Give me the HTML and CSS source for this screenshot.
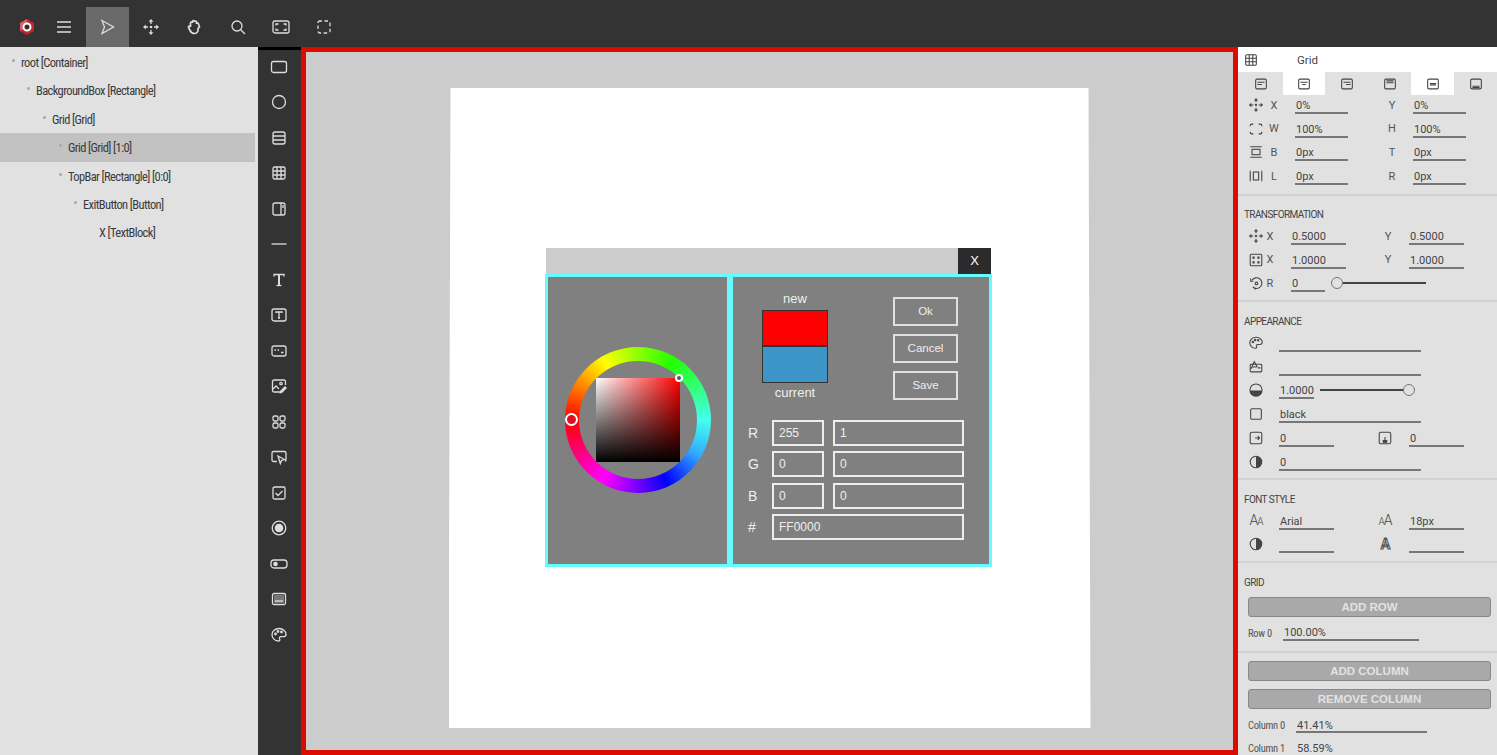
FILE: index.html
```html
<!DOCTYPE html>
<html lang="en">
<head>
    <meta charset="UTF-8">
    <meta name="viewport" content="width=device-width, initial-scale=1.0">
    <title>UI Editor</title>
    <link rel="stylesheet" href="styles.css">
</head>
<body>
    <svg class="sprite" xmlns="http://www.w3.org/2000/svg">
        <symbol id="i-arrow" viewBox="0 0 18 18"><path d="M4 2.500 15.500 9 4 15.500 6.500 9z"/></symbol>
        <symbol id="i-menu" viewBox="0 0 18 18"><path d="M2 4h14M2 9h14M2 14h14"/></symbol>
        <symbol id="i-move" viewBox="0 0 18 18"><circle class="solid" cx="9" cy="9" r="1.300"/><path d="M9 6V3M9 12v3M6 9H3M12 9h3"/><path class="solid" d="M9 1l2.400 2.800H6.600zM9 17l2.400-2.800H6.600zM1 9l2.800-2.400v4.800zM17 9l-2.800-2.400v4.800z"/></symbol>
        <symbol id="i-hand" viewBox="0 0 18 18"><path stroke-width="1.700" d="M5.500 9V5a1 1 0 0 1 2 0V3.500a1 1 0 0 1 2 0V4a1 1 0 0 1 2 0v2a1 1 0 0 1 2 .2l1 2.800-1.500 1.500c.3 3-.8 5-3.500 5-2.500 0-3.500-1-4.500-3L3.500 9.500c-.5-1.200 1.300-2 2-.5z"/></symbol>
        <symbol id="i-search" viewBox="0 0 18 18"><circle cx="8" cy="8" r="5"/><path d="m11.700 11.700 4.300 4.300"/></symbol>
        <symbol id="i-fit" viewBox="0 0 18 18"><rect x="1" y="3" width="16" height="12" rx="2"/><path d="M4 7.500V6h2.500M14 7.500V6h-2.500M4 10.500V12h2.500M14 10.500V12h-2.500"/></symbol>
        <symbol id="i-dash" viewBox="0 0 18 18"><rect x="3" y="3" width="12" height="12" rx="2" stroke-dasharray="3.500 2.500" stroke-dashoffset="1.500"/></symbol>
        <symbol id="i-rect" viewBox="0 0 18 18"><rect x="1.500" y="3.500" width="15" height="11" rx="2"/></symbol>
        <symbol id="i-circle" viewBox="0 0 18 18"><circle cx="9" cy="9" r="6.500"/></symbol>
        <symbol id="i-rows" viewBox="0 0 18 18"><rect x="3" y="3" width="12" height="12" rx="2"/><path d="M3 7h12M3 11h12"/></symbol>
        <symbol id="i-grid" viewBox="0 0 18 18"><rect x="3" y="3" width="12" height="12" rx="1.500"/><path d="M3 7h12M3 11h12M7 3v12M11 3v12"/></symbol>
        <symbol id="i-split" viewBox="0 0 18 18"><rect x="3" y="3" width="12" height="12" rx="2"/><path d="M11 3v12"/><path d="M13 5v3"/></symbol>
        <symbol id="i-line" viewBox="0 0 18 18"><path d="M1.500 9h15"/></symbol>
        <symbol id="i-t" viewBox="0 0 18 18"><path d="M4 5.500V3.500h10v2"/><path stroke-width="2" d="M9 3.500v11"/><path d="M6.500 14.500h5"/></symbol>
        <symbol id="i-tbox" viewBox="0 0 18 18"><rect x="2" y="3" width="14" height="12" rx="2"/><path d="M6 7V6h6v1M9 6v6M8 12h2"/></symbol>
        <symbol id="i-input" viewBox="0 0 18 18"><rect x="2" y="4" width="14" height="10" rx="2"/><path stroke-width="1.600" d="M4.500 8h1.500M7.500 8h1.500M11 10.500h2.500"/></symbol>
        <symbol id="i-img" viewBox="0 0 18 18"><path d="M10 15H4a1.500 1.500 0 0 1-1.500-1.500v-9A1.500 1.500 0 0 1 4 3h10a1.500 1.500 0 0 1 1.500 1.500V8"/><path d="m3 12 3-3 3 3"/><circle cx="11" cy="6.500" r="1.200"/><path class="solid" d="m10 14 5-5 2 2-5 5-2.500.5z"/></symbol>
        <symbol id="i-apps" viewBox="0 0 18 18"><rect x="3" y="3" width="5" height="5" rx="1.500"/><rect x="10" y="3" width="5" height="5" rx="1.500"/><rect x="3" y="10" width="5" height="5" rx="1.500"/><rect x="10" y="10" width="5" height="5" rx="1.500"/></symbol>
        <symbol id="i-cursor" viewBox="0 0 18 18"><path d="M7 13.500H3.500a1.500 1.500 0 0 1-1.500-1.500V5a1.500 1.500 0 0 1 1.500-1.500h11A1.500 1.500 0 0 1 16 5v7a1.500 1.500 0 0 1-1 1.400"/><path d="m8 8 6.500 3.500-3 1-1.200 3z"/></symbol>
        <symbol id="i-check" viewBox="0 0 18 18"><rect x="3" y="3" width="12" height="12" rx="1.500"/><path d="m5.500 9 2.500 2.500 4.500-4.500"/></symbol>
        <symbol id="i-radio" viewBox="0 0 18 18"><circle cx="9" cy="9" r="6.800"/><circle class="solid" cx="9" cy="9" r="4.300"/></symbol>
        <symbol id="i-toggle" viewBox="0 0 18 18"><rect x="1" y="5" width="16" height="8" rx="3"/><circle class="solid" cx="5.500" cy="9" r="2.300"/></symbol>
        <symbol id="i-panel" viewBox="0 0 18 18"><rect x="2.500" y="3.500" width="13" height="11" rx="1.500"/><rect class="dim" x="4" y="5" width="10" height="8"/><path d="M5 11h8"/></symbol>
        <symbol id="i-palette" viewBox="0 0 18 18"><path d="M9 2.500c-3.800 0-7 2.800-7 6.300 0 3.300 2.800 6.200 6.300 6.200 1.500 0 1.900-1 1.300-2-.6-1.100 0-2.300 1.300-2.300h2.300c1.500 0 2.800-.8 2.800-2.500 0-3.200-3.200-5.700-6.700-5.700z"/><circle cx="5.500" cy="8" r=".8"/><circle cx="8" cy="5.500" r=".8"/><circle cx="11.500" cy="6" r=".8"/></symbol>
        <symbol id="i-bgimg" viewBox="0 0 18 18"><rect x="2.500" y="6" width="13" height="8.500" rx="1"/><path d="M3.500 11 7 3l3.500 6M5 9h5M11 10h3"/></symbol>
        <symbol id="i-tab1" viewBox="0 0 18 18"><rect x="3" y="3.500" width="12" height="11" rx="1.500"/><path d="M5 7h8M5 9.500h5"/></symbol>
        <symbol id="i-tab2" viewBox="0 0 18 18"><rect x="3" y="3.500" width="12" height="11" rx="1.500"/><path d="M5 7h8M7 9.500h4"/></symbol>
        <symbol id="i-tab3" viewBox="0 0 18 18"><rect x="3" y="3.500" width="12" height="11" rx="1.500"/><path d="M5 7h8M8 9.500h5"/></symbol>
        <symbol id="i-tab4" viewBox="0 0 18 18"><rect x="3" y="3.500" width="12" height="11" rx="1.500"/><path d="M5 5.500h8M5 7.500h8"/></symbol>
        <symbol id="i-tab5" viewBox="0 0 18 18"><rect x="3" y="3.500" width="12" height="11" rx="1.500"/><path d="M5.500 8.500h7M5.500 10h7"/></symbol>
        <symbol id="i-tab6" viewBox="0 0 18 18"><rect x="3" y="3.500" width="12" height="11" rx="1.500"/><path d="M5 11.500h8M5 13h8"/></symbol>
        <symbol id="i-wh" viewBox="0 0 18 18"><path d="M2.500 6V5a1.500 1.500 0 0 1 1.500-1.500h2M12 3.500h2A1.500 1.500 0 0 1 15.500 5v1M15.500 12v1a1.500 1.500 0 0 1-1.500 1.500h-2M6 14.500H4A1.500 1.500 0 0 1 2.500 13v-1"/></symbol>
        <symbol id="i-bt" viewBox="0 0 18 18"><path d="M2.500 3h13M2.500 15h13"/><rect x="4.500" y="6" width="9" height="6"/></symbol>
        <symbol id="i-lr" viewBox="0 0 18 18"><path d="M2.500 3v12M15.500 3v12"/><rect x="6" y="4.500" width="6" height="9"/></symbol>
        <symbol id="i-scale" viewBox="0 0 18 18"><rect x="2.500" y="2.500" width="13" height="13" rx="1.500"/><path class="solid" d="M5 5h2.500v2.500H5zM10.500 5H13v2.500h-2.500zM5 10.500h2.500V13H5zM10.500 10.500H13V13h-2.500z"/></symbol>
        <symbol id="i-rotate" viewBox="0 0 18 18"><path d="M4.500 6a6 6 0 1 1 1 7.500L9 16"/><path d="M3 4v3h3"/><circle cx="9.500" cy="9.500" r="1.500"/></symbol>
        <symbol id="i-opacity" viewBox="0 0 18 18"><circle cx="9" cy="9" r="6.800"/><path class="solid" d="M2.200 9.500h13.600A6.800 6.800 0 0 1 2.200 9.500z"/></symbol>
        <symbol id="i-square" viewBox="0 0 18 18"><rect x="3" y="3" width="12" height="12" rx="1.500"/></symbol>
        <symbol id="i-shadowx" viewBox="0 0 18 18"><rect x="2.500" y="2.500" width="13" height="13" rx="2"/><path d="M8 9h5M11 7l2 2-2 2"/></symbol>
        <symbol id="i-shadowy" viewBox="0 0 18 18"><rect x="2.500" y="2.500" width="13" height="13" rx="2"/><path d="M6.500 12h5M9 8v4"/><path class="solid" d="M6.500 11.500h5v3h-5z"/></symbol>
        <symbol id="i-half" viewBox="0 0 18 18"><circle cx="9" cy="9" r="6.500"/><path class="solid" d="M9 2.500a6.500 6.500 0 0 1 0 13z"/></symbol>
    </svg>

    <header class="topbar">
        <div class="top-btn brand">
            <svg class="logo" viewBox="0 0 18 18">
                <polygon points="9,1 16,5 16,13 9,17 2,13 2,5" fill="#c4242c"/>
                <polygon points="2,5 9,1 9,9 2,13" fill="#d9606a"/>
                <circle cx="9" cy="9" r="3.500" fill="#3a2a2a" stroke="#fff" stroke-width="2"/>
            </svg>
        </div>
        <div class="top-btn"><svg class="icon"><use href="#i-menu"/></svg></div>
        <div class="top-btn active"><svg class="icon"><use href="#i-arrow"/></svg></div>
        <div class="top-btn"><svg class="icon"><use href="#i-move"/></svg></div>
        <div class="top-btn"><svg class="icon"><use href="#i-hand"/></svg></div>
        <div class="top-btn"><svg class="icon"><use href="#i-search"/></svg></div>
        <div class="top-btn"><svg class="icon"><use href="#i-fit"/></svg></div>
        <div class="top-btn"><svg class="icon"><use href="#i-dash"/></svg></div>
    </header>

    <main class="workspace">
        <nav class="tree">
            <div class="node lvl0">root [Container]</div>
            <div class="node lvl1">BackgroundBox [Rectangle]</div>
            <div class="node lvl2">Grid [Grid]</div>
            <div class="node lvl3 selected">Grid [Grid] [1:0]</div>
            <div class="node lvl3">TopBar [Rectangle] [0:0]</div>
            <div class="node lvl4">ExitButton [Button]</div>
            <div class="node lvl5 leaf">X [TextBlock]</div>
        </nav>

        <aside class="tools">
            <div class="tool"><svg class="icon"><use href="#i-rect"/></svg></div>
            <div class="tool"><svg class="icon"><use href="#i-circle"/></svg></div>
            <div class="tool"><svg class="icon"><use href="#i-rows"/></svg></div>
            <div class="tool"><svg class="icon"><use href="#i-grid"/></svg></div>
            <div class="tool"><svg class="icon"><use href="#i-split"/></svg></div>
            <div class="tool"><svg class="icon"><use href="#i-line"/></svg></div>
            <div class="tool"><svg class="icon"><use href="#i-t"/></svg></div>
            <div class="tool"><svg class="icon"><use href="#i-tbox"/></svg></div>
            <div class="tool"><svg class="icon"><use href="#i-input"/></svg></div>
            <div class="tool"><svg class="icon"><use href="#i-img"/></svg></div>
            <div class="tool"><svg class="icon"><use href="#i-apps"/></svg></div>
            <div class="tool"><svg class="icon"><use href="#i-cursor"/></svg></div>
            <div class="tool"><svg class="icon"><use href="#i-check"/></svg></div>
            <div class="tool"><svg class="icon"><use href="#i-radio"/></svg></div>
            <div class="tool"><svg class="icon"><use href="#i-toggle"/></svg></div>
            <div class="tool"><svg class="icon"><use href="#i-panel"/></svg></div>
            <div class="tool"><svg class="icon"><use href="#i-palette"/></svg></div>
        </aside>

        <section class="canvas">
            <div class="page">
                <div class="dialog">
                    <div class="dialog-bar"><div class="dialog-close">X</div></div>
                    <div class="dialog-body">
                        <div class="panel wheel-panel">
                            <div class="wheel">
                                <div class="wheel-hole"></div>
                                <div class="sv-box"></div>
                                <div class="hue-handle"></div>
                                <div class="sv-handle"></div>
                            </div>
                        </div>
                        <div class="panel values-panel">
                            <div class="values-top">
                                <div class="preview">
                                    <div class="preview-label">new</div>
                                    <div class="swatch swatch-new"></div>
                                    <div class="swatch swatch-current"></div>
                                    <div class="preview-label current">current</div>
                                </div>
                                <div class="dialog-actions">
                                    <div class="dialog-btn">Ok</div>
                                    <div class="dialog-btn">Cancel</div>
                                    <div class="dialog-btn">Save</div>
                                </div>
                            </div>
                            <div class="values">
                                <span class="value-label">R</span><span class="value">255</span><span class="value">1</span>
                                <span class="value-label">G</span><span class="value">0</span><span class="value">0</span>
                                <span class="value-label">B</span><span class="value">0</span><span class="value">0</span>
                                <span class="value-label">#</span><span class="value wide">FF0000</span>
                            </div>
                        </div>
                    </div>
                </div>
            </div>
        </section>

        <aside class="props">
            <div class="props-head">
                <svg class="ico"><use href="#i-grid"/></svg>
                <span class="props-name">Grid</span>
            </div>
            <div class="tabs">
                <div class="tab"><svg class="ico"><use href="#i-tab1"/></svg></div>
                <div class="tab on"><svg class="ico"><use href="#i-tab2"/></svg></div>
                <div class="tab"><svg class="ico"><use href="#i-tab3"/></svg></div>
                <div class="tab"><svg class="ico"><use href="#i-tab4"/></svg></div>
                <div class="tab on"><svg class="ico"><use href="#i-tab5"/></svg></div>
                <div class="tab"><svg class="ico"><use href="#i-tab6"/></svg></div>
            </div>

            <div class="group layout-group">
                <div class="row">
                    <svg class="ico"><use href="#i-move"/></svg><span class="lbl">X</span><span class="field">0%</span>
                    <span class="lbl">Y</span><span class="field">0%</span>
                </div>
                <div class="row">
                    <svg class="ico"><use href="#i-wh"/></svg><span class="lbl">W</span><span class="field">100%</span>
                    <span class="lbl">H</span><span class="field">100%</span>
                </div>
                <div class="row">
                    <svg class="ico"><use href="#i-bt"/></svg><span class="lbl">B</span><span class="field">0px</span>
                    <span class="lbl">T</span><span class="field">0px</span>
                </div>
                <div class="row">
                    <svg class="ico"><use href="#i-lr"/></svg><span class="lbl">L</span><span class="field">0px</span>
                    <span class="lbl">R</span><span class="field">0px</span>
                </div>
            </div>

            <div class="group transform-group">
                <div class="group-title">TRANSFORMATION</div>
                <div class="row">
                    <svg class="ico"><use href="#i-move"/></svg><span class="lbl">X</span><span class="field">0.5000</span>
                    <span class="lbl">Y</span><span class="field">0.5000</span>
                </div>
                <div class="row">
                    <svg class="ico"><use href="#i-scale"/></svg><span class="lbl">X</span><span class="field">1.0000</span>
                    <span class="lbl">Y</span><span class="field">1.0000</span>
                </div>
                <div class="row">
                    <svg class="ico"><use href="#i-rotate"/></svg><span class="lbl">R</span><span class="field short">0</span>
                    <div class="slider rotate-slider"><span class="knob"></span></div>
                </div>
            </div>

            <div class="group look-group">
                <div class="group-title">APPEARANCE</div>
                <div class="row"><svg class="ico"><use href="#i-palette"/></svg><span class="field long"></span></div>
                <div class="row"><svg class="ico"><use href="#i-bgimg"/></svg><span class="field long"></span></div>
                <div class="row">
                    <svg class="ico"><use href="#i-opacity"/></svg><span class="field short">1.0000</span>
                    <div class="slider opacity-slider"><span class="knob"></span></div>
                </div>
                <div class="row"><svg class="ico"><use href="#i-square"/></svg><span class="field long">black</span></div>
                <div class="row">
                    <svg class="ico"><use href="#i-shadowx"/></svg><span class="field">0</span>
                    <svg class="ico second"><use href="#i-shadowy"/></svg><span class="field">0</span>
                </div>
                <div class="row"><svg class="ico"><use href="#i-half"/></svg><span class="field long">0</span></div>
            </div>

            <div class="group look-group">
                <div class="group-title">FONT STYLE</div>
                <div class="row">
                    <span class="ico glyph">A<small>A</small></span><span class="field">Arial</span>
                    <span class="ico glyph second"><small>A</small>A</span><span class="field">18px</span>
                </div>
                <div class="row">
                    <svg class="ico"><use href="#i-half"/></svg><span class="field"></span>
                    <span class="ico glyph outline second">A</span><span class="field"></span>
                </div>
            </div>

            <div class="group grid-group">
                <div class="group-title">GRID</div>
                <div class="wide-btn">ADD ROW</div>
                <div class="row track-row">
                    <span class="track-lbl">Row 0</span><span class="field track-row-field">100.00%</span>
                </div>
            </div>

            <div class="group columns-group">
                <div class="wide-btn">ADD COLUMN</div>
                <div class="wide-btn">REMOVE COLUMN</div>
                <div class="row col-row">
                    <span class="track-lbl">Column 0</span><span class="field track-col-field">41.41%</span>
                </div>
                <div class="row col-row col-last">
                    <span class="track-lbl">Column 1</span><span class="field track-col-field">58.59%</span>
                </div>
            </div>
        </aside>
    </main>
</body>
</html>
```

FILE: styles.css
```css
* {
    box-sizing: border-box;
}
html, body {
    margin: 0;
    height: 100%;
    overflow: hidden;
}
body {
    display: flex;
    flex-direction: column;
    font-family: Roboto, "Liberation Sans", sans-serif;
    font-size: 12px;
    color: #333;
    background-color: #e1e1e1;
}
.sprite {
    display: none;
}
svg {
    fill: none;
    stroke: currentColor;
    stroke-width: 1.3;
}
.solid {
    fill: currentColor;
    stroke: none;
}
.dim {
    fill: #777;
    stroke: none;
}

/* top bar */
.topbar {
    display: flex;
    height: 47px;
    flex-shrink: 0;
    background-color: #333;
    color: #ddd;
}
.top-btn {
    width: 43.4px;
    margin-top: 7px;
    display: flex;
    align-items: center;
    justify-content: center;
}
.top-btn.brand {
    width: 42.3px;
    padding-left: 12px;
}
.top-btn.active {
    background-color: #6a6a6a;
}
.icon {
    width: 18px;
    height: 18px;
}
.logo {
    width: 18px;
    height: 18px;
    stroke: none;
}

.workspace {
    flex: 1;
    display: flex;
    min-height: 0;
}

/* element tree */
.tree {
    width: 258px;
    flex-shrink: 0;
    padding-top: 1px;
}
.node {
    position: relative;
    height: 28.4px;
    line-height: 30px;
    margin-right: 3px;
    font-size: 12.5px;
    font-stretch: condensed;
    letter-spacing: -0.62px;
    color: #3a3a3a;
}
.node::before {
    content: "";
    position: absolute;
    top: 11px;
    width: 3px;
    height: 3px;
    margin-left: -9px;
    border-radius: 50%;
    background-color: #a8a8a8;
}
.node.leaf::before {
    display: none;
}
.lvl0 { padding-left: 21px; }
.lvl1 { padding-left: 36px; }
.lvl2 { padding-left: 52px; }
.lvl3 { padding-left: 68px; }
.lvl4 { padding-left: 83px; }
.lvl5 { padding-left: 99px; }
.node.selected {
    background-color: #c2c2c2;
}

/* tool column */
.tools {
    width: 43px;
    flex-shrink: 0;
    padding-right: 1px;
    border-top: 3px solid #000;
    background-color: #333;
    color: #ddd;
}
.tool {
    height: 35.5px;
    display: flex;
    align-items: center;
    justify-content: center;
}
.tool:first-child {
    margin-top: -1px;
}

/* canvas */
.canvas {
    flex: 1;
    min-width: 0;
    display: flex;
    justify-content: center;
    padding-top: 36px;
    border: 5px solid #dd0a00;
    background-color: #ccc;
}
.page {
    width: 642px;
    height: 640px;
    display: flex;
    align-items: center;
    justify-content: center;
    background-color: #fff;
    clip-path: polygon(2px 0, calc(100% - 2px) 0, 100% 100%, 0 100%);
}

/* color picker dialog */
.dialog {
    width: 447px;
    margin: 0 2px 2px 0;
    font-family: "Liberation Sans", Arial, sans-serif;
    color: #eee;
}
.dialog-bar {
    height: 26px;
    margin: 0 1px;
    display: flex;
    justify-content: flex-end;
    background-color: #ccc;
}
.dialog-close {
    width: 33px;
    display: flex;
    align-items: center;
    justify-content: center;
    font-size: 13px;
    background-color: #2b2b2b;
    color: #fff;
}
.dialog-body {
    display: flex;
    height: 293px;
}
.panel {
    border: 3px solid #66fbff;
    background-color: #808080;
}
.wheel-panel {
    width: 185px;
    display: flex;
    align-items: center;
    justify-content: center;
}
.values-panel {
    flex: 1;
    padding: 15px 0 0 29px;
}
.wheel {
    position: relative;
    width: 146px;
    height: 146px;
    border-radius: 50%;
    background: conic-gradient(from 270deg, #f00, #ff0 60deg, #2f0 120deg, #4fe 180deg, #3af 210deg, #00f 245deg, #f0f 300deg, #f00);
}
.wheel-hole {
    position: absolute;
    inset: 14px;
    border-radius: 50%;
    background-color: #808080;
}
.sv-box {
    position: absolute;
    left: 31px;
    top: 31px;
    width: 84px;
    height: 84px;
    background: linear-gradient(to top, #000, rgba(0, 0, 0, 0)), linear-gradient(to right, #fff, #f00);
}
.hue-handle {
    position: absolute;
    left: 0;
    top: 66px;
    width: 13px;
    height: 13px;
    border: 2px solid #fff;
    border-radius: 50%;
    background-color: #e01020;
}
.sv-handle {
    position: absolute;
    left: 110px;
    top: 27px;
    width: 8px;
    height: 8px;
    border: 2px solid #fff;
    border-radius: 50%;
    background-color: #555;
}
.values-top {
    display: flex;
    height: 108px;
}
.preview {
    width: 66px;
    text-align: center;
    font-size: 13px;
}
.preview-label {
    height: 14px;
    line-height: 14px;
    margin-bottom: 4px;
}
.preview-label.current {
    margin: 3px 0 0;
}
.swatch {
    height: 36.5px;
    border: 1px solid #333;
}
.swatch-new {
    background-color: #f00;
}
.swatch-current {
    background-color: #3d94c6;
}
.dialog-actions {
    margin: 5px 0 0 65px;
    display: flex;
    flex-direction: column;
    gap: 8px;
}
.dialog-btn {
    width: 65px;
    height: 29px;
    display: flex;
    align-items: center;
    justify-content: center;
    border: 2px solid #e0e0e0;
    font-size: 11.5px;
}
.values {
    display: grid;
    grid-template-columns: 15px 52px 131px;
    grid-auto-rows: 26px;
    column-gap: 9px;
    row-gap: 5.6px;
    margin: 20px 0 0 -14px;
}
.value-label {
    align-self: center;
    font-size: 14px;
}
.value {
    display: flex;
    align-items: center;
    padding-left: 5px;
    border: 2px solid #eee;
    font-size: 12px;
}
.value.wide {
    grid-column: span 2;
}

/* properties panel */
.props {
    width: 259px;
    flex-shrink: 0;
    overflow: hidden;
    font-size: 11px;
    color: #444;
}
.props-head {
    height: 25px;
    display: flex;
    align-items: center;
    padding-left: 5px;
    background-color: #fff;
}
.props-name {
    margin-left: 38px;
    font-size: 11.5px;
}
.tabs {
    display: flex;
    height: 23px;
    padding-left: 1.6px;
}
.tab {
    width: 43.4px;
    display: flex;
    align-items: center;
    justify-content: center;
}
.tab.on {
    background-color: #fff;
}
.ico {
    width: 16px;
    height: 16px;
    flex-shrink: 0;
    stroke-width: 1.2;
}
.group {
    display: flex;
    flex-direction: column;
    gap: 5.7px;
    padding: 13px 0 8px 10px;
    border-bottom: 2px solid #d2d2d2;
}
.group-title {
    height: 12px;
    line-height: 14px;
    margin: 0 0 0 -4px;
    font-size: 10px;
    letter-spacing: -0.6px;
    color: #444;
}
.row {
    display: flex;
    align-items: center;
    height: 18px;
}
.lbl {
    width: 20px;
    text-align: center;
    font-size: 11px;
    color: #555;
}
.field {
    width: 53px;
    height: 18px;
    margin-left: 11px;
    padding-left: 1px;
    line-height: 20px;
    border-bottom: 2px solid #777;
    font-size: 11px;
}
.field + .lbl {
    margin-left: 34px;
}
.layout-group {
    padding-top: 1px;
    padding-bottom: 9px;
}
.transform-group {
    padding-top: 12px;
}
.transform-group .group-title {
    margin-bottom: 1.3px;
}
.transform-group .lbl {
    width: 12px;
}
.transform-group .field {
    width: 55px;
    margin-left: 15px;
}
.transform-group .field + .lbl {
    margin-left: 36px;
}
.transform-group .field.short {
    width: 34px;
}
.slider {
    position: relative;
    height: 2px;
    background-color: #444;
}
.knob {
    position: absolute;
    top: -5px;
    width: 12px;
    height: 12px;
    border: 1px solid #777;
    border-radius: 50%;
    background-color: #e1e1e1;
}
.rotate-slider {
    width: 95px;
    margin-left: 6px;
}
.rotate-slider .knob {
    left: 0;
}
.look-group {
    padding-bottom: 7.3px;
}
.look-group .group-title {
    margin-bottom: 1px;
}
.look-group .field {
    width: 55px;
    margin-left: 15px;
}
.look-group .field.short {
    width: 35px;
}
.look-group .field.long {
    width: 142px;
}
.opacity-slider {
    width: 95px;
    margin-left: 6px;
}
.opacity-slider .knob {
    right: 0;
}
.second {
    margin-left: 43px;
}
.look-group .second + .field {
    margin-left: 16px;
}
.glyph {
    display: inline-block;
    height: auto;
    text-align: center;
    line-height: 16px;
    font-size: 14px;
    letter-spacing: -1px;
    font-weight: 300;
}
.glyph small {
    font-size: 10px;
}
.glyph.outline {
    font-weight: 700;
    color: #e1e1e1;
    -webkit-text-stroke: 1px #555;
}
.grid-group {
    gap: 0;
    padding-bottom: 10px;
}
.grid-group .group-title {
    margin-bottom: 9px;
}
.track-row {
    margin-top: 6.5px;
}
.track-lbl {
    width: 35px;
    padding-top: 3px;
    font-size: 10.5px;
    font-stretch: condensed;
    letter-spacing: -0.3px;
    color: #555;
}
.track-row-field {
    width: 136px;
    margin-left: 0;
}
.col-row .track-lbl {
    width: 48px;
}
.track-col-field {
    width: 131px;
    margin-left: 0;
}
.wide-btn {
    width: 243px;
    height: 20px;
    line-height: 18px;
    text-align: center;
    border: 1px solid #888;
    border-radius: 3px;
    background-color: #a9a9a9;
    font-family: "Liberation Sans", Arial, sans-serif;
    font-size: 11.5px;
    font-weight: 700;
    color: #e2e2e2;
}
.columns-group {
    gap: 8px;
    padding-top: 8px;
    padding-bottom: 0;
    border-bottom: none;
}
.columns-group .col-row {
    margin-top: -2px;
}
.columns-group .col-row .field {
    line-height: 21px;
}
.columns-group .col-last {
    height: 13px;
    margin-top: 1px;
}
.col-last .track-lbl {
    padding-top: 0;
    line-height: 13px;
}
.columns-group .col-last .field {
    height: 13px;
    line-height: 13px;
    border-bottom: none;
}
```
